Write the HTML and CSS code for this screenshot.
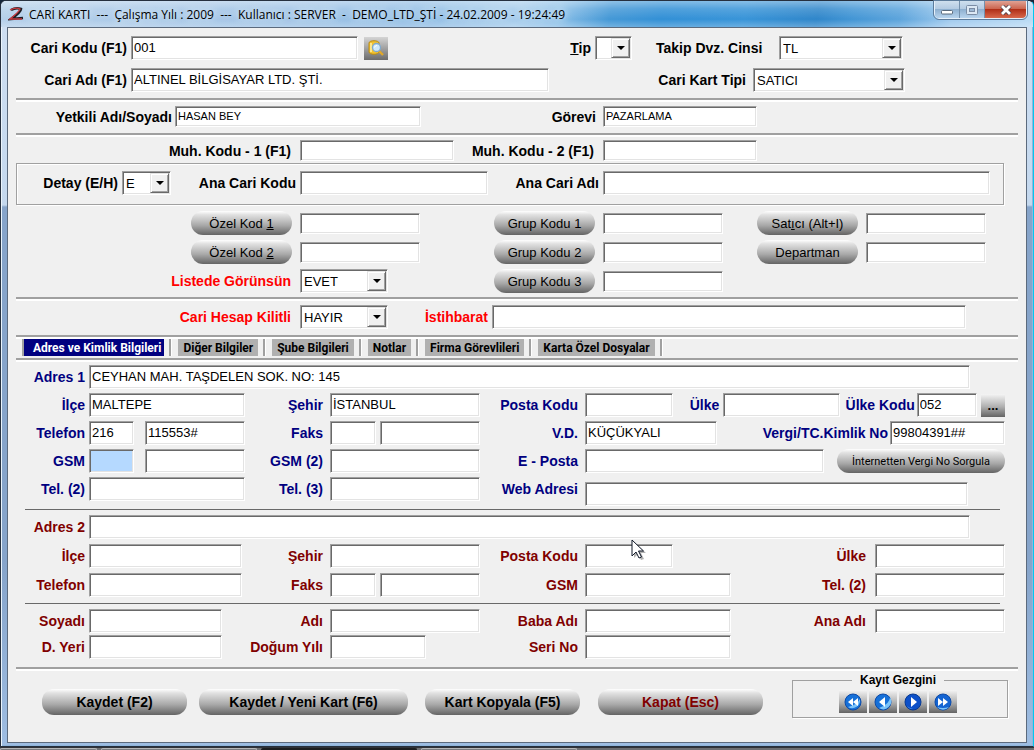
FILE: index.html
```html
<!DOCTYPE html>
<html lang="tr">
<head>
<meta charset="utf-8">
<title>CARİ KARTI</title>
<link rel="stylesheet" href="styles.css">
</head>
<body>
<div class="window">
  <header class="titlebar">
    <svg class="logo" viewBox="0 0 16 16" aria-hidden="true">
      <path d="M3 4Q8 1 13 3Q13 6 3 13L15 12" fill="none" stroke="#1c1c22" stroke-width="2.600"/>
      <path d="M2 4Q8 1 12 3Q11 6 2 13L14 13" fill="none" stroke="#c83a40" stroke-width="1.300"/>
    </svg>
    <h1 class="title">CARİ KARTI&nbsp; ---&nbsp; Çalışma Yılı : 2009&nbsp; ---&nbsp; Kullanıcı : SERVER&nbsp; -&nbsp; DEMO_LTD_ŞTİ - 24.02.2009 - 19:24:49</h1>
    <div class="caption-buttons">
      <button class="cap" aria-label="Simge durumuna küçült"><svg viewBox="0 0 12 10"><rect x="0.5" y="5.5" width="11" height="3.5" rx="1" fill="#fff" stroke="#5a6a7c"/></svg></button>
      <button class="cap" aria-label="Ekranı kapla"><svg viewBox="0 0 12 10"><rect x="0.5" y="0.5" width="11" height="9" rx="1" fill="#dce8f4" stroke="#7b8ca4"/><rect x="3.5" y="3.5" width="5" height="3" fill="#9db8d4" stroke="#7b8ca4"/></svg></button>
      <button class="cap cap-close" aria-label="Kapat"><svg viewBox="0 0 12 10"><path d="M2 1L10 9M10 1L2 9" stroke="#50404a" stroke-width="4.4"/><path d="M2 1L10 9M10 1L2 9" stroke="#fff" stroke-width="2.8"/></svg></button>
    </div>
  </header>

  <main class="panel">
    <form class="form">
      <section class="block general">
        <div class="row row-code">
          <label for="kod">Cari Kodu (F1)</label>
          <input class="field" id="kod" value="001">
          <button type="button" class="square search" aria-label="Ara"><svg viewBox="0 0 18 18">
            <path d="M2 4c0-3 10-3 10 0v9c0 3-10 3-10 0z" fill="#f2c230" stroke="#b98a10"/>
            <path d="M4 4v9" stroke="#fff2a8" stroke-width="1.5"/>
            <path d="M11 11l5 5" stroke="#e0a82a" stroke-width="2.4"/>
            <circle cx="9.500" cy="8.500" r="4" fill="#cfe9fa" stroke="#7fa9cc" stroke-width="1.300"/>
            <path d="M7.500 8.500q.5-2 2.500-2" fill="none" stroke="#fff"/></svg></button>
          <label for="tip"><u>T</u>ip</label>
          <span class="combo"><select id="tip"><option></option></select></span>
          <label class="lead" for="cins">Takip Dvz. Cinsi</label>
          <span class="combo"><select id="cins"><option>TL</option></select></span>
        </div>
        <div class="row row-name">
          <label for="ad">Cari Adı (F1)</label>
          <input class="field" id="ad" value="ALTINEL BİLGİSAYAR LTD. ŞTİ.">
          <label for="kart">Cari Kart Tipi</label>
          <span class="combo"><select id="kart"><option>SATICI</option></select></span>
        </div>
      </section>
      <hr class="groove">
      <section class="block contact">
        <div class="row row-contact">
          <label class="tight" for="yet">Yetkili Adı/Soyadı</label>
          <input class="field low small" id="yet" value="HASAN BEY">
          <label for="gor">Görevi</label>
          <input class="field low small" id="gor" value="PAZARLAMA">
        </div>
      </section>
      <hr class="groove">
      <section class="block account">
        <div class="row row-account">
          <label class="wide" for="m1">Muh. Kodu - 1 (F1)</label>
          <input class="field low" id="m1">
          <label class="wide" for="m2">Muh. Kodu - 2 (F1)</label>
          <input class="field low" id="m2">
        </div>
      </section>
      <section class="detail">
        <div class="row row-detail">
          <label for="det">Detay (E/H)</label>
          <span class="combo"><select id="det"><option>E</option></select></span>
          <label for="ak">Ana Cari Kodu</label>
          <input class="field" id="ak">
          <label for="aa">Ana Cari Adı</label>
          <input class="field" id="aa">
        </div>
      </section>
      <section class="block codes">
        <div class="row row-codes">
          <div class="action"><button type="button" class="pill">Özel Kod <u>1</u></button></div>
          <input class="field low" aria-label="Özel Kod 1">
          <div class="action"><button type="button" class="pill">Grup Kodu 1</button></div>
          <input class="field low" aria-label="Grup Kodu 1">
          <div class="action"><button type="button" class="pill">Sat<u>ı</u>cı (Alt+I)</button></div>
          <input class="field low" aria-label="Satıcı">
        </div>
        <div class="row row-codes">
          <div class="action"><button type="button" class="pill">Özel Kod <u>2</u></button></div>
          <input class="field low" aria-label="Özel Kod 2">
          <div class="action"><button type="button" class="pill">Grup Kodu 2</button></div>
          <input class="field low" aria-label="Grup Kodu 2">
          <div class="action"><button type="button" class="pill">Departman</button></div>
          <input class="field low" aria-label="Departman">
        </div>
        <div class="row row-codes">
          <label class="wide alert" for="lis">Listede Görünsün</label>
          <span class="combo combo-yesno"><select id="lis"><option>EVET</option></select></span>
          <div class="action"><button type="button" class="pill">Grup Kodu 3</button></div>
          <input class="field low" aria-label="Grup Kodu 3">
        </div>
      </section>
      <hr class="groove">
      <section class="block lock">
        <div class="row row-lock">
          <label class="wide alert" for="kil">Cari Hesap Kilitli</label>
          <span class="combo"><select id="kil"><option>HAYIR</option></select></span>
          <label class="alert" for="ist">İstihbarat</label>
          <input class="field" id="ist">
        </div>
      </section>
      <hr class="groove">
      <nav class="tabs">
        <button type="button" class="tab tab-active">Adres ve Kimlik Bilgileri</button>
        <button type="button" class="tab">Diğer Bilgiler</button>
        <button type="button" class="tab">Şube Bilgileri</button>
        <button type="button" class="tab">Notlar</button>
        <button type="button" class="tab">Firma Görevlileri</button>
        <button type="button" class="tab">Karta Özel Dosyalar</button>
      </nav>
      <hr class="groove">

      <section class="address primary">
        <div class="row row-street">
          <label for="a1">Adres 1</label>
          <input class="field" id="a1" value="CEYHAN MAH. TAŞDELEN SOK. NO: 145">
        </div>
        <div class="row row-address">
          <label for="ilce">İlçe</label>
          <input class="field" id="ilce" value="MALTEPE">
          <label class="mid" for="seh">Şehir</label>
          <input class="field" id="seh" value="İSTANBUL">
          <label class="mid" for="pk">Posta Kodu</label>
          <div class="country">
            <input class="field" id="pk">
            <label for="ulke">Ülke</label>
            <input class="field" id="ulke">
            <label class="close" for="uk">Ülke Kodu</label>
            <input class="field" id="uk" value="052">
            <button type="button" class="square dots">...</button>
          </div>
        </div>
        <div class="row row-address">
          <label for="tel">Telefon</label>
          <div class="phone"><input class="field" id="tel" value="216"><input class="field" aria-label="Telefon numarası" value="115553#"></div>
          <label class="mid" for="fax">Faks</label>
          <div class="fax"><input class="field" id="fax"><input class="field" aria-label="Faks numarası"></div>
          <label class="mid" for="vd">V.D.</label>
          <div class="tax">
            <input class="field" id="vd" value="KÜÇÜKYALI">
            <label class="close" for="vno">Vergi/TC.Kimlik No</label>
            <input class="field" id="vno" value="99804391##">
          </div>
        </div>
        <div class="row row-address">
          <label for="gsm">GSM</label>
          <div class="phone"><input class="field focused" id="gsm"><input class="field" aria-label="GSM numarası"></div>
          <label class="mid" for="gsm2">GSM (2)</label>
          <input class="field" id="gsm2">
          <label class="mid" for="mail">E - Posta</label>
          <div class="mail">
            <input class="field" id="mail">
            <button type="button" class="pill query">İnternetten Vergi No Sorgula</button>
          </div>
        </div>
        <div class="row row-address row-web">
          <label for="tel2">Tel. (2)</label>
          <input class="field" id="tel2">
          <label class="mid" for="tel3">Tel. (3)</label>
          <input class="field" id="tel3">
          <label class="mid" for="web">Web Adresi</label>
          <div class="web"><input class="field" id="web"></div>
        </div>
      </section>
      <hr class="thin">
      <section class="address secondary">
        <div class="row row-street">
          <label for="a2">Adres 2</label>
          <input class="field" id="a2">
        </div>
        <div class="row row-address2">
          <label for="ilce2">İlçe</label>
          <input class="field" id="ilce2">
          <label class="mid" for="seh2">Şehir</label>
          <input class="field" id="seh2">
          <label class="mid" for="pk2">Posta Kodu</label>
          <div class="postal"><input class="field" id="pk2"></div>
          <label class="wide" for="ulke2">Ülke</label>
          <input class="field" id="ulke2">
        </div>
        <div class="row row-address2">
          <label for="tel4">Telefon</label>
          <input class="field" id="tel4">
          <label class="mid" for="fax2">Faks</label>
          <div class="fax"><input class="field" id="fax2"><input class="field" aria-label="Faks numarası 2"></div>
          <label class="mid" for="gsm3">GSM</label>
          <input class="field" id="gsm3">
          <label class="wide" for="tel5">Tel. (2)</label>
          <input class="field" id="tel5">
        </div>
      </section>
      <hr class="thin">
      <section class="address identity">
        <div class="row row-address2">
          <label for="soy">Soyadı</label>
          <div class="surname"><input class="field" id="soy"></div>
          <label class="mid" for="adi">Adı</label>
          <input class="field" id="adi">
          <label class="mid" for="baba">Baba Adı</label>
          <input class="field" id="baba">
          <label class="wide" for="ana">Ana Adı</label>
          <input class="field" id="ana">
        </div>
        <div class="row row-address2">
          <label for="yer">D. Yeri</label>
          <div class="surname"><input class="field" id="yer"></div>
          <label class="mid" for="yil">Doğum Yılı</label>
          <div class="year"><input class="field" id="yil"></div>
          <label class="mid" for="seri">Seri No</label>
          <input class="field" id="seri">
        </div>
      </section>
      <hr class="groove">

      <footer class="commands">
        <button type="button" class="pill command save">Kaydet (F2)</button>
        <button type="button" class="pill command save-new">Kaydet / Yeni Kart (F6)</button>
        <button type="button" class="pill command copy">Kart Kopyala (F5)</button>
        <button type="button" class="pill command quit">Kapat (Esc)</button>
        <fieldset class="navigator">
          <legend>Kayıt Gezgini</legend>
          <button type="button" class="square nav" aria-label="İlk kayıt"><svg viewBox="0 0 18 18"><circle cx="9" cy="9" r="8" fill="#1670d8" stroke="#0c4aa8"/><path d="M4 14a8 8 0 0 0 12-8q-3 6-12 8z" fill="#7cc4fa"/><path d="M9 5v8L4 9zM14 5v8L9 9z" fill="#fff"/></svg></button>
          <button type="button" class="square nav" aria-label="Önceki kayıt"><svg viewBox="0 0 18 18"><circle cx="9" cy="9" r="8" fill="#1670d8" stroke="#0c4aa8"/><path d="M5 15a8 8 0 0 0 11-11q0 7-11 11z" fill="#7cc4fa"/><path d="M11 4v10L5 9z" fill="#fff"/></svg></button>
          <button type="button" class="square nav" aria-label="Sonraki kayıt"><svg viewBox="0 0 18 18"><circle cx="9" cy="9" r="8" fill="#0d50c8" stroke="#083a92"/><path d="M3 13a7 7 0 0 0 6 3q-4-1-6-3z" fill="#5aa4f0"/><path d="M7 4v10l6-5z" fill="#fff"/></svg></button>
          <button type="button" class="square nav" aria-label="Son kayıt"><svg viewBox="0 0 18 18"><circle cx="9" cy="9" r="8" fill="#1464d2" stroke="#0c4aa8"/><path d="M3 14a8 8 0 0 0 12 0q-6 2-12 0z" fill="#7cc4fa"/><path d="M4 5v8l5-4zM9 5v8l5-4z" fill="#fff"/></svg></button>
        </fieldset>
      </footer>
    </form>
  </main>
</div>
<div class="taskbar"><i></i><i></i><i class="current"></i><i></i></div>
<svg class="cursor" viewBox="0 0 16 22" aria-hidden="true">
  <path d="M3 3v16l4-4 3 6 3-1-3-6h5z" fill="#000" opacity=".3"/>
  <path d="M1 1v16l4-4 3 6 2.500-1-3-6h5z" fill="#fff" stroke="#101828"/>
</svg>
</body>
</html>
```
FILE: styles.css
```css
* { box-sizing: border-box; }

body {
  margin: 0;
  min-height: 100vh;
  display: flex;
  flex-direction: column;
  background: #14243a;
  font-family: "Liberation Sans", Arial, sans-serif;
  font-size: 13px;
  color: #000;
}

button, input, select { font: inherit; color: #000; margin: 0; padding: 0; min-width: 0; }

/* Window frame */
.window {
  flex: 1;
  display: flex;
  flex-direction: column;
  padding: 0 6px 3px;
  border: 1px solid #26303f;
  border-right-color: #00c8f0;
  border-radius: 6px 6px 0 0;
  background: linear-gradient(#cfdff2 0, #c4d8ee 204px, #86a4ca 206px, #86a4ca 560px, #9ebde2 100%);
  box-shadow: inset 1px 1px #eaf4fc, inset -1px -1px #8fb6dc;
}

.titlebar {
  display: flex;
  align-items: center;
  height: 26px;
  margin: 0 -6px;
  padding-left: 7px;
  border-radius: 5px 5px 0 0;
  background:
    linear-gradient(rgba(255,255,255,.4) 0, rgba(255,255,255,.15) 30%, rgba(255,255,255,0) 70%, rgba(255,255,255,.25) 100%),
    linear-gradient(100deg, #b4cfea 0, #9fc3e6 28%, #8dbbe4 40%, #a3cbec 50%, #8cc0e8 54%, #4498d6 59%, #3290d6 64%, #3894d8 72%, #2f86ca 79%, #4094d4 82%, #5ca4dc 87%, #a0caee 92%, #b9daf4 100%);
}

.logo { width: 16px; height: 16px; margin-right: 5px; }

.title {
  flex: 1;
  margin: 0;
  font: 12px "Open Sans", "Noto Sans", sans-serif;
  white-space: nowrap;
  text-shadow: 0 0 6px #dcecfa, 0 0 10px #dcecfa;
}

.caption-buttons {
  display: flex;
  align-self: flex-start;
  height: 18px;
  margin-right: 6px;
  border: 1px solid #e6f0fa;
  border-top: 0;
  border-radius: 0 0 5px 5px;
  overflow: hidden;
  outline: 1px solid #5d7c9c;
}

.cap {
  width: 25px;
  border: 0;
  border-right: 1px solid #7490ac;
  background: linear-gradient(#cfdfee, #b4cbe2 45%, #8fb0d0 50%, #b8d4ee);
}

.cap svg { display: block; width: 12px; height: 10px; margin: 0 auto; }

.cap-close {
  width: 41px;
  border-right: 0;
  background: linear-gradient(#e0a294, #cc6650 45%, #b03018 50%, #d8684c);
}

.panel {
  flex: 1;
  border: 1px solid #5b6a7d;
  background: #f0f0f0;
}

/* Form rows */
.form { padding: 8px 8px 0; }

.row { display: grid; align-items: center; }

label {
  padding-right: 4px;
  font-size: 14px;
  font-weight: bold;
  line-height: 16px;
  text-align: right;
  white-space: nowrap;
}

label.tight { padding-right: 3px; }
label.mid { padding-right: 7px; }
label.wide { padding-right: 9px; }
label.close { padding-right: 2px; }
label.lead { text-align: left; padding-left: 24px; }
.alert { color: #f00; }

.field, .combo {
  width: 100%;
  height: 24px;
  border: 1px solid;
  border-color: #a0a0a0 #fff #fff #a0a0a0;
  border-radius: 0;
  background: #fff;
  box-shadow: inset 1px 1px #696969, inset -1px -1px #e3e3e3;
}

.field { padding: 0 2px 2px; outline: 0; }
.field.low { height: 21px; }
.field.small { font-size: 11px; }
.field.focused { background: #b5d9ff; }

.combo { position: relative; display: block; }

.combo select {
  display: block;
  width: 100%;
  height: 22px;
  padding-left: 3px;
  border: 0;
  background: transparent;
  appearance: none;
  outline: 0;
}

.combo::before {
  content: "";
  position: absolute;
  top: 1px;
  right: 1px;
  bottom: 1px;
  width: 17px;
  border: 1px solid;
  border-color: #e3e3e3 #696969 #696969 #e3e3e3;
  background: #f0f0f0;
  box-shadow: inset 1px 1px #fff, inset -1px -1px #a0a0a0;
  pointer-events: none;
}

.combo::after {
  content: "";
  position: absolute;
  top: 9px;
  right: 6px;
  border: 4px solid transparent;
  border-top-color: #000;
  border-bottom: 0;
  pointer-events: none;
}

.combo-yesno { width: 88px; }

.general { display: grid; gap: 8px; margin-bottom: 6px; }
.row-code { grid-template-columns: 115px 227fr 30px 207fr 37px 147px 124fr 115fr; }
.row-name { grid-template-columns: 115px 418fr 204fr 152fr 113fr; }
.row-name label:nth-of-type(2) { padding-right: 7px; }
.row-contact { grid-template-columns: 159px 246fr 182fr 154fr 261fr; margin: 4px 0 6px; }
.row-contact label:nth-of-type(2) { padding-right: 7px; }
.row-account { grid-template-columns: 284px 154fr 149fr 154fr 261fr; margin: 3px 0 2px; }

.detail {
  margin-right: 14px;
  padding: 7px 0 9px;
  border: 1px solid #a0a0a0;
  box-shadow: inset 1px 1px #fff, 1px 1px #fff;
}

.row-detail { grid-template-columns: 105px 49px 129px 188fr 115fr 387fr 13px; }

.codes { display: grid; gap: 5px; margin: 6px 0 4px; }
.row-codes { grid-template-columns: 284px 120fr 183fr 120fr 143fr 120fr 32fr; }
.action { display: flex; justify-content: flex-end; padding-right: 8px; }

.row-lock { grid-template-columns: 284px 88px 104px 474fr 52fr; margin: 4px 0 6px; }

.groove {
  height: 4px;
  margin: 0;
  border: 0;
  border-top: 2px solid #a0a0a0;
  border-bottom: 2px solid #fff;
}

.thin {
  height: 1px;
  margin: 0 18px 0 9px;
  border: 0;
  background: #696969;
}

/* Buttons */
.pill {
  width: 101px;
  height: 24px;
  border: 0;
  border-radius: 12px;
  background: linear-gradient(#fff 0, #e2e2e2 15%, #a8a8a8 60%, #646464 100%);
  white-space: nowrap;
}

.square {
  height: 23px;
  border: 0;
  background: linear-gradient(#f4f4f4 0, #b0b0b0 55%, #646464 100%);
}

.search { width: 24px; justify-self: end; background: linear-gradient(#d4d4d4, #6c6c6c); }
.search svg, .nav svg { display: block; width: 18px; height: 18px; margin: 0 auto; }

/* Tabs */
.tabs { display: flex; height: 19px; padding: 0 0 2px 6px; }

.tab {
  position: relative;
  flex: none;
  margin-right: 14px;
  padding: 0 5px;
  border: 0;
  background: #b0b0b0;
  font: bold 12px Roboto, "Liberation Sans", sans-serif;
}

.tab::after {
  content: "";
  position: absolute;
  top: 0;
  right: -8px;
  width: 2px;
  height: 17px;
  background: #a0a0a0;
  border-right: 1px solid #fff;
}

.tab-active {
  padding: 0 3px 0 9px;
  border-left: 2px solid #a0a0a0;
  background: #000080;
  color: #fff;
}

/* Address area */
.address { display: grid; gap: 4px; padding-right: 13px; }
.address label { color: #800000; }
.primary { margin: 3px 0; }
.primary label { color: #000080; }
.secondary { gap: 5px; margin: 5px 0 6px; }
.identity { gap: 2px; margin: 5px 0 8px; }

.row-street { grid-template-columns: 73px 881fr 35fr; }
.row-address { grid-template-columns: 73px 156fr 85px 150fr 105px 420fr; }
.row-web { align-items: start; }
.row-web label { padding-top: 4px; }
.row-address2 { grid-template-columns: 73px 153fr 88px 150fr 105px 146fr 144fr 130fr; }

.phone { display: grid; grid-template-columns: 45fr 100fr; gap: 11px; }
.fax { display: grid; grid-template-columns: 46fr 100fr; gap: 4px; }
.country { display: grid; grid-template-columns: 88fr 50px 116fr 77px 60fr 28px; align-items: center; }
.tax { display: grid; grid-template-columns: 132fr 173px 115fr; align-items: center; }
.mail { display: grid; grid-template-columns: 239fr 168px; column-gap: 13px; align-items: center; height: 24px; }
.web { padding: 5px 37px 0 0; }
.postal { width: 60%; }
.surname { width: 87%; }
.year { width: 64%; }
.dots { width: 24px; justify-self: end; font-weight: bold; }
.query { width: 168px; font: 11px Roboto, "Liberation Sans", sans-serif; }

/* Command bar */
.commands { display: flex; align-items: flex-end; padding: 2px 10px 24px 26px; }
.command { flex: 0 1 auto; height: 26px; margin-bottom: 3px; font-size: 14px; font-weight: bold; }
.save { width: 145px; margin-right: 12px; }
.save-new { width: 209px; margin-right: 17px; }
.copy { width: 155px; margin-right: 18px; }
.quit { width: 165px; color: #800000; }

.navigator {
  display: flex;
  justify-content: center;
  gap: 2px;
  width: 216px;
  margin: 0 0 0 auto;
  padding: 3px 4px 4px 0;
  border: 1px solid #a0a0a0;
  box-shadow: 1px 1px #fff;
}

.navigator legend { margin: 0 auto; padding: 0 8px; font-size: 12px; font-weight: bold; line-height: 14px; }
.nav { width: 28px; }

/* Desktop strip under the window */
.taskbar { display: flex; gap: 4px; height: 4px; background: #6c6e72; border-top: 1px solid #303338; }
.taskbar i { width: 156px; border: 1px solid #b4b6b8; border-bottom: 0; background: #7a7c80; border-radius: 2px 2px 0 0; }
.taskbar i:first-child { width: 97px; }
.taskbar .current { background: #1c1e20; border-color: #1c1e20; }

.cursor { position: absolute; left: 631px; top: 539px; width: 16px; height: 22px; }
```
